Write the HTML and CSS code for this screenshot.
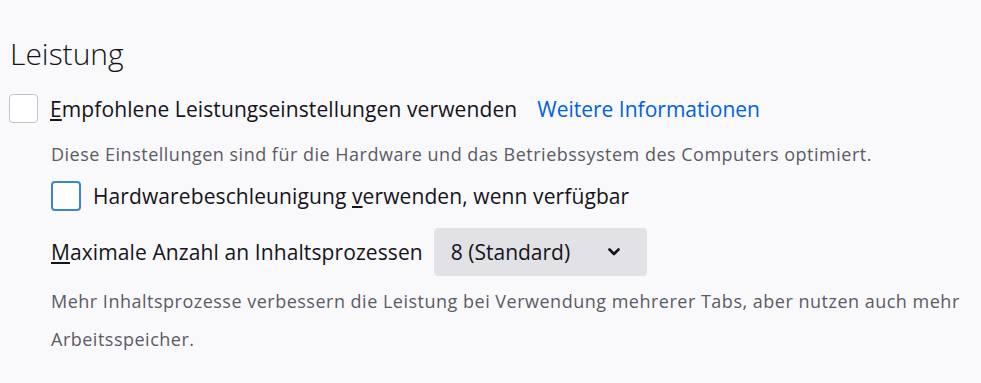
FILE: index.html
```html
<!DOCTYPE html>
<html lang="de">
<head>
    <meta charset="UTF-8">
    <title>Leistung</title>
    <link rel="stylesheet" href="styles.css">
</head>
<body>
    <section class="pane">
        <h1 class="pane-title">Leistung</h1>

        <label class="check-row">
            <span class="check-box"></span>
            <span class="check-label"><u>E</u>mpfohlene Leistungseinstellungen verwenden</span>
            <a class="learn-more" href="#">Weitere Informationen</a>
        </label>

        <div class="indent">
            <p class="note">Diese Einstellungen sind für die Hardware und das Betriebssystem des Computers optimiert.</p>

            <label class="check-row sub">
                <span class="check-box focused"></span>
                <span class="check-label">Hardwarebeschleunigung <u>v</u>erwenden, wenn verfügbar</span>
            </label>

            <div class="select-row">
                <span class="select-label"><u>M</u>aximale Anzahl an Inhaltsprozessen</span>
                <div class="select-box">
                    <span>8 (Standard)</span>
                    <svg class="chevron" width="12" height="8" viewBox="0 0 12 8">
                        <path d="M1.5 1.5 L6 6 L10.5 1.5" fill="none" stroke="#15141a" stroke-width="2.6" stroke-linecap="round" stroke-linejoin="round"/>
                    </svg>
                </div>
            </div>

            <p class="note long">Mehr Inhaltsprozesse verbessern die Leistung bei Verwendung mehrerer Tabs, aber nutzen auch mehr Arbeitsspeicher.</p>
        </div>
    </section>
</body>
</html>
```

FILE: styles.css
```css
body {
    margin: 0;
    background-color: #f9f9fb;
    color: #15141a;
    font-family: "Open Sans", "Noto Sans", sans-serif;
    font-size: 21px;
}

.pane {
    padding: 30px 0 0 9px;
}

.pane-title {
    margin: 0 0 16px 1px;
    font-size: 30px;
    font-weight: 300;
    line-height: 48px;
}

.check-row {
    display: flex;
    align-items: center;
    gap: 12px;
}

.check-box {
    width: 27px;
    height: 27px;
    border: 1px solid #c3c3c8;
    border-radius: 4px;
    background: #ffffff;
    flex: none;
}

.check-box.focused {
    width: 26px;
    height: 26px;
    border: 2px solid #3b84d8;
}

.check-label,
.select-label {
    letter-spacing: 0.1px;
}

.learn-more {
    margin-left: 8px;
    color: #0061e0;
    text-decoration: none;
}

.indent {
    padding-left: 42px;
}

.note {
    margin: 12px 0 0;
    font-size: 18px;
    color: #5b5b66;
    line-height: 38px;
    letter-spacing: 0.5px;
}

.check-row.sub {
    margin-top: 8px;
}

.select-row {
    display: flex;
    align-items: center;
    gap: 11px;
    margin-top: 17px;
}

.select-box {
    display: flex;
    align-items: center;
    justify-content: space-between;
    width: 213px;
    height: 48px;
    padding: 0 27px 0 17px;
    box-sizing: border-box;
    background: #e2e2e6;
    border-radius: 4px;
}

.note.long {
    margin-top: 6px;
    max-width: 920px;
}
```
